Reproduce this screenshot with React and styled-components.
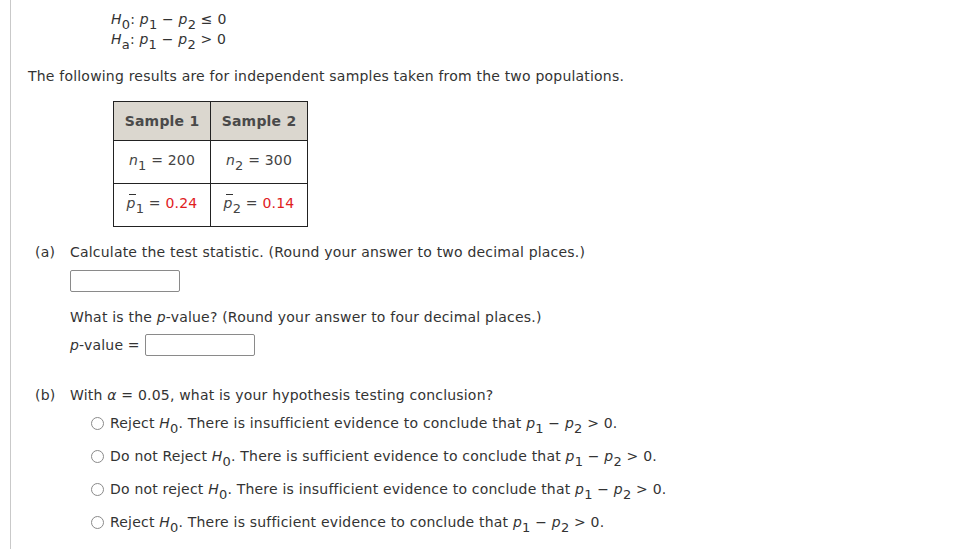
import React from "react";
import styled, { createGlobalStyle } from "styled-components";

const GlobalStyle = createGlobalStyle`
  body {
    margin: 0;
    background: #fff;
    font-family: "DejaVu Sans", Verdana, sans-serif;
    font-size: 14px;
    letter-spacing: 0.2px;
    color: #333;
  }
`;

const Page = styled.div`
  margin-left: 10px;
  border-left: 1px solid #c9c9c9;
  min-height: 549px;
  padding: 11px 0 0 17px;
  box-sizing: border-box;
`;

const Hypotheses = styled.div`
  margin-left: 83px;
  line-height: 17px;
`;

const Line = styled.div`
  white-space: nowrap;
`;

const Var = styled.i`
  font-style: italic;
`;

const Sub = styled.span`
  font-size: 13px;
  vertical-align: -5px;
  line-height: 1;
  font-style: normal;
`;

const Bar = styled.i`
  font-style: italic;
  display: inline-block;
  position: relative;
  &::before {
    content: "";
    position: absolute;
    left: 2px;
    right: 0;
    top: -1px;
    border-top: 1px solid #333;
  }
`;

const Intro = styled.p`
  margin: 17px 0 0;
  line-height: 17px;
`;

const Table = styled.table`
  margin: 16px 0 0 85px;
  border-collapse: collapse;
  border: 1px solid #222;
`;

const Th = styled.th`
  width: 96px;
  height: 38px;
  padding: 0;
  background: #dbd7cf;
  color: #4a4a4a;
  font-weight: bold;
  border: 1px solid #222;
  text-align: center;
`;

const Td = styled.td`
  height: 42px;
  padding: 0;
  border: 1px solid #222;
  text-align: center;
  color: #444;
`;

const Red = styled.span`
  color: #e0201e;
`;

const Part = styled.div`
  display: grid;
  grid-template-columns: 35px 1fr;
  margin: ${(p) => p.$top}px 0 0 7px;
`;

const Label = styled.div`
  line-height: 17px;
`;

const Body = styled.div`
  line-height: 17px;
`;

const Box = styled.div`
  width: 108px;
  height: 20px;
  border: 1px solid #8a8a8a;
  border-radius: 2px;
  background: #fff;
  display: inline-block;
  vertical-align: middle;
`;

const Para = styled.div`
  margin-top: ${(p) => p.$top}px;
`;

const AnswerRow = styled.div`
  margin-top: ${(p) => p.$top}px;
  display: flex;
  align-items: center;
  gap: 5px;
`;

const Options = styled.div`
  margin: 11px 0 0 21px;
  display: flex;
  flex-direction: column;
  gap: 13px;
`;

const Option = styled.label`
  display: flex;
  align-items: center;
  gap: 6px;
  line-height: 17px;
  white-space: nowrap;
`;

const Radio = styled.span`
  width: 11px;
  height: 11px;
  border: 1px solid #8a8a8a;
  border-radius: 50%;
  flex: none;
  margin-top: -3px;
`;

const H0 = () => (
  <>
    <Var>H</Var>
    <Sub>0</Sub>
  </>
);

const Diff = () => (
  <>
    <Var>p</Var>
    <Sub>1</Sub> − <Var>p</Var>
    <Sub>2</Sub>
  </>
);

const options = [
  ["Reject ", "There is insufficient evidence to conclude that "],
  ["Do not Reject ", "There is sufficient evidence to conclude that "],
  ["Do not reject ", "There is insufficient evidence to conclude that "],
  ["Reject ", "There is sufficient evidence to conclude that "],
];

export default function App() {
  return (
    <Page>
      <GlobalStyle />
      <Hypotheses>
        <Line>
          <H0 />: <Diff /> ≤ 0
        </Line>
        <Line>
          <Var>H</Var>
          <Sub>a</Sub>: <Diff /> &gt; 0
        </Line>
      </Hypotheses>
      <Intro>
        The following results are for independent samples taken from the two
        populations.
      </Intro>
      <Table>
        <thead>
          <tr>
            <Th>Sample 1</Th>
            <Th>Sample 2</Th>
          </tr>
        </thead>
        <tbody>
          <tr>
            <Td>
              <Var>n</Var>
              <Sub>1</Sub> = 200
            </Td>
            <Td>
              <Var>n</Var>
              <Sub>2</Sub> = 300
            </Td>
          </tr>
          <tr>
            <Td>
              <Bar>p</Bar>
              <Sub>1</Sub> = <Red>0.24</Red>
            </Td>
            <Td>
              <Bar>p</Bar>
              <Sub>2</Sub> = <Red>0.14</Red>
            </Td>
          </tr>
        </tbody>
      </Table>
      <Part $top={17}>
        <Label>(a)</Label>
        <Body>
          Calculate the test statistic. (Round your answer to two decimal
          places.)
          <AnswerRow $top={9}>
            <Box />
          </AnswerRow>
          <Para $top={17}>
            What is the <Var>p</Var>-value? (Round your answer to four decimal
            places.)
          </Para>
          <AnswerRow $top={8}>
            <span>
              <Var>p</Var>-value =
            </span>
            <Box />
          </AnswerRow>
        </Body>
      </Part>
      <Part $top={31}>
        <Label>(b)</Label>
        <Body>
          With <Var>α</Var> = 0.05, what is your hypothesis testing conclusion?
          <Options>
            {options.map(([a, b], i) => (
              <Option key={i}>
                <Radio />
                <span>
                  {a}
                  <H0 />. {b}
                  <Diff /> &gt; 0.
                </span>
              </Option>
            ))}
          </Options>
        </Body>
      </Part>
    </Page>
  );
}
